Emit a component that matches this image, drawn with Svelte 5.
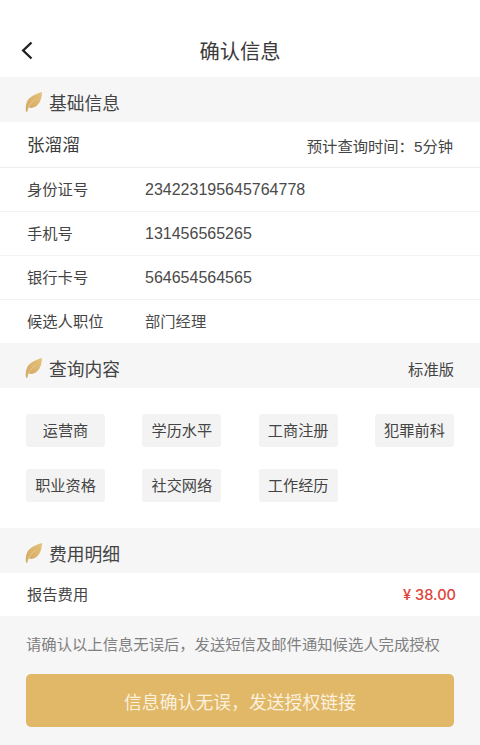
<script>
  const rows = [
    { label: "身份证号", value: "234223195645764778", num: true },
    { label: "手机号", value: "131456565265", num: true },
    { label: "银行卡号", value: "564654564565", num: true },
    { label: "候选人职位", value: "部门经理", num: false }
  ];
  const tags = ["运营商", "学历水平", "工商注册", "犯罪前科", "职业资格", "社交网络", "工作经历"];
</script>

{#snippet leaf()}
  <svg class="leaf" viewBox="0 0 18 20" width="18" height="20">
    <defs>
      <linearGradient id="leafGrad" x1="1" y1="0" x2="0" y2="1">
        <stop offset="0" stop-color="#e6c27c" />
        <stop offset="0.6" stop-color="#d9b16a" />
        <stop offset="1" stop-color="#cfa862" />
      </linearGradient>
    </defs>
    <path d="M17 0C16.8 6 15.2 11.5 10.8 14.6C8.2 16.2 5.5 16.2 3.5 15.5C3 17 2.6 18.5 2.2 20L1 19.6C0.6 17 0.4 13 2.3 9C4.3 5 10 2 17 0Z" fill="url(#leafGrad)" />
    <path d="M2.8 17.5C3.8 14 6 10.5 10.5 7" fill="none" stroke="#f0dcb4" stroke-width="0.6" />
  </svg>
{/snippet}

<div class="page">
  <header class="nav">
    <svg class="back" viewBox="0 0 12 19" width="12" height="19">
      <path d="M10.5 1.5L2.2 9.5L10.5 17.5" fill="none" stroke="#222" stroke-width="2.4" />
    </svg>
    <h1>确认信息</h1>
  </header>

  <div class="section">{@render leaf()}<span>基础信息</span></div>

  <div class="person">
    <span class="name">张溜溜</span>
    <span class="eta">预计查询时间：5分钟</span>
  </div>
  <div class="rows">
    {#each rows as row}
      <div class="row">
        <span class="label">{row.label}</span>
        <span class="value" class:num={row.num}>{row.value}</span>
      </div>
    {/each}
  </div>

  <div class="section">
    {@render leaf()}<span>查询内容</span>
    <span class="edition">标准版</span>
  </div>

  <div class="tags">
    {#each tags as tag}
      <div class="tag">{tag}</div>
    {/each}
  </div>

  <div class="section">{@render leaf()}<span>费用明细</span></div>

  <div class="fee">
    <span>报告费用</span>
    <span class="price">¥ 38.00</span>
  </div>

  <footer>
    <p>请确认以上信息无误后，发送短信及邮件通知候选人完成授权</p>
    <button>信息确认无误，发送授权链接</button>
  </footer>
</div>

<style>
  :global(body) {
    margin: 0;
    background: #f6f6f7;
  }

  .page {
    width: 480px;
    height: 745px;
    overflow: hidden;
    background: #f6f6f7;
    color: #3c3c3c;
    font-family: "Liberation Sans", "Noto Sans CJK SC", sans-serif;
  }

  .nav {
    height: 77px;
    background: #fff;
    display: flex;
    align-items: center;
    justify-content: center;
    position: relative;
    padding-top: 24px;
    box-sizing: border-box;
  }

  .nav h1 {
    margin: 0;
    font-size: 20.25px;
    font-weight: 400;
    color: #3a3a3a;
  }

  .back {
    position: absolute;
    left: 21px;
    top: 41px;
  }

  .section {
    height: 45px;
    display: flex;
    align-items: center;
    padding: 4px 26px 0 25px;
    box-sizing: border-box;
    font-size: 17.75px;
    color: #444;
  }

  .leaf {
    margin-right: 6px;
    flex: none;
  }

  .edition {
    margin-left: auto;
    font-size: 15.3px;
    color: #444;
  }

  .person {
    height: 46px;
    background: #fff;
    border-bottom: 1px solid #eee;
    box-sizing: border-box;
    display: flex;
    align-items: center;
    justify-content: space-between;
    padding: 0 27px;
  }

  .name {
    font-size: 17.6px;
    margin-bottom: 3px;
  }

  .eta {
    font-size: 15.3px;
    color: #444;
    margin-top: 1px;
  }

  .rows {
    height: 175px;
    background: #fff;
  }

  .row {
    height: 44px;
    line-height: 43px;
    border-bottom: 1px solid #f3f3f3;
    box-sizing: border-box;
    display: flex;
    align-items: baseline;
    padding: 0 27px;
    font-size: 15.3px;
  }

  .row:last-child {
    border-bottom: none;
    height: 43px;
  }

  .label {
    width: 118px;
    flex: none;
    color: #444;
  }

  .value {
    color: #4a4a4a;
  }

  .num {
    font-size: 16px;
  }

  .tags {
    background: #fff;
    display: grid;
    grid-template-columns: repeat(4, 79px);
    justify-content: space-between;
    row-gap: 22px;
    padding: 26px 26px 0;
    height: 140px;
    box-sizing: border-box;
    align-content: start;
  }

  .tag {
    height: 33px;
    line-height: 33px;
    text-align: center;
    background: #f3f3f3;
    border-radius: 3px;
    font-size: 15.2px;
    color: #444;
  }

  .fee {
    height: 43px;
    line-height: 43px;
    background: #fff;
    display: flex;
    align-items: baseline;
    justify-content: space-between;
    padding: 0 24px 0 27px;
    box-sizing: border-box;
    font-size: 15.3px;
    color: #444;
  }

  .price {
    color: #de4339;
    font-family: Inter, "Liberation Sans", sans-serif;
    font-size: 14.6px;
    font-weight: 500;
  }

  footer {
    padding: 0 26px;
  }

  footer p {
    margin: 0;
    height: 58px;
    line-height: 58px;
    font-size: 15.33px;
    color: #808080;
    white-space: nowrap;
  }

  button {
    display: block;
    width: 100%;
    height: 53px;
    border: none;
    border-radius: 5px;
    background: #e1b768;
    color: #fbf1dd;
    font-family: inherit;
    font-size: 17.85px;
  }
</style>
